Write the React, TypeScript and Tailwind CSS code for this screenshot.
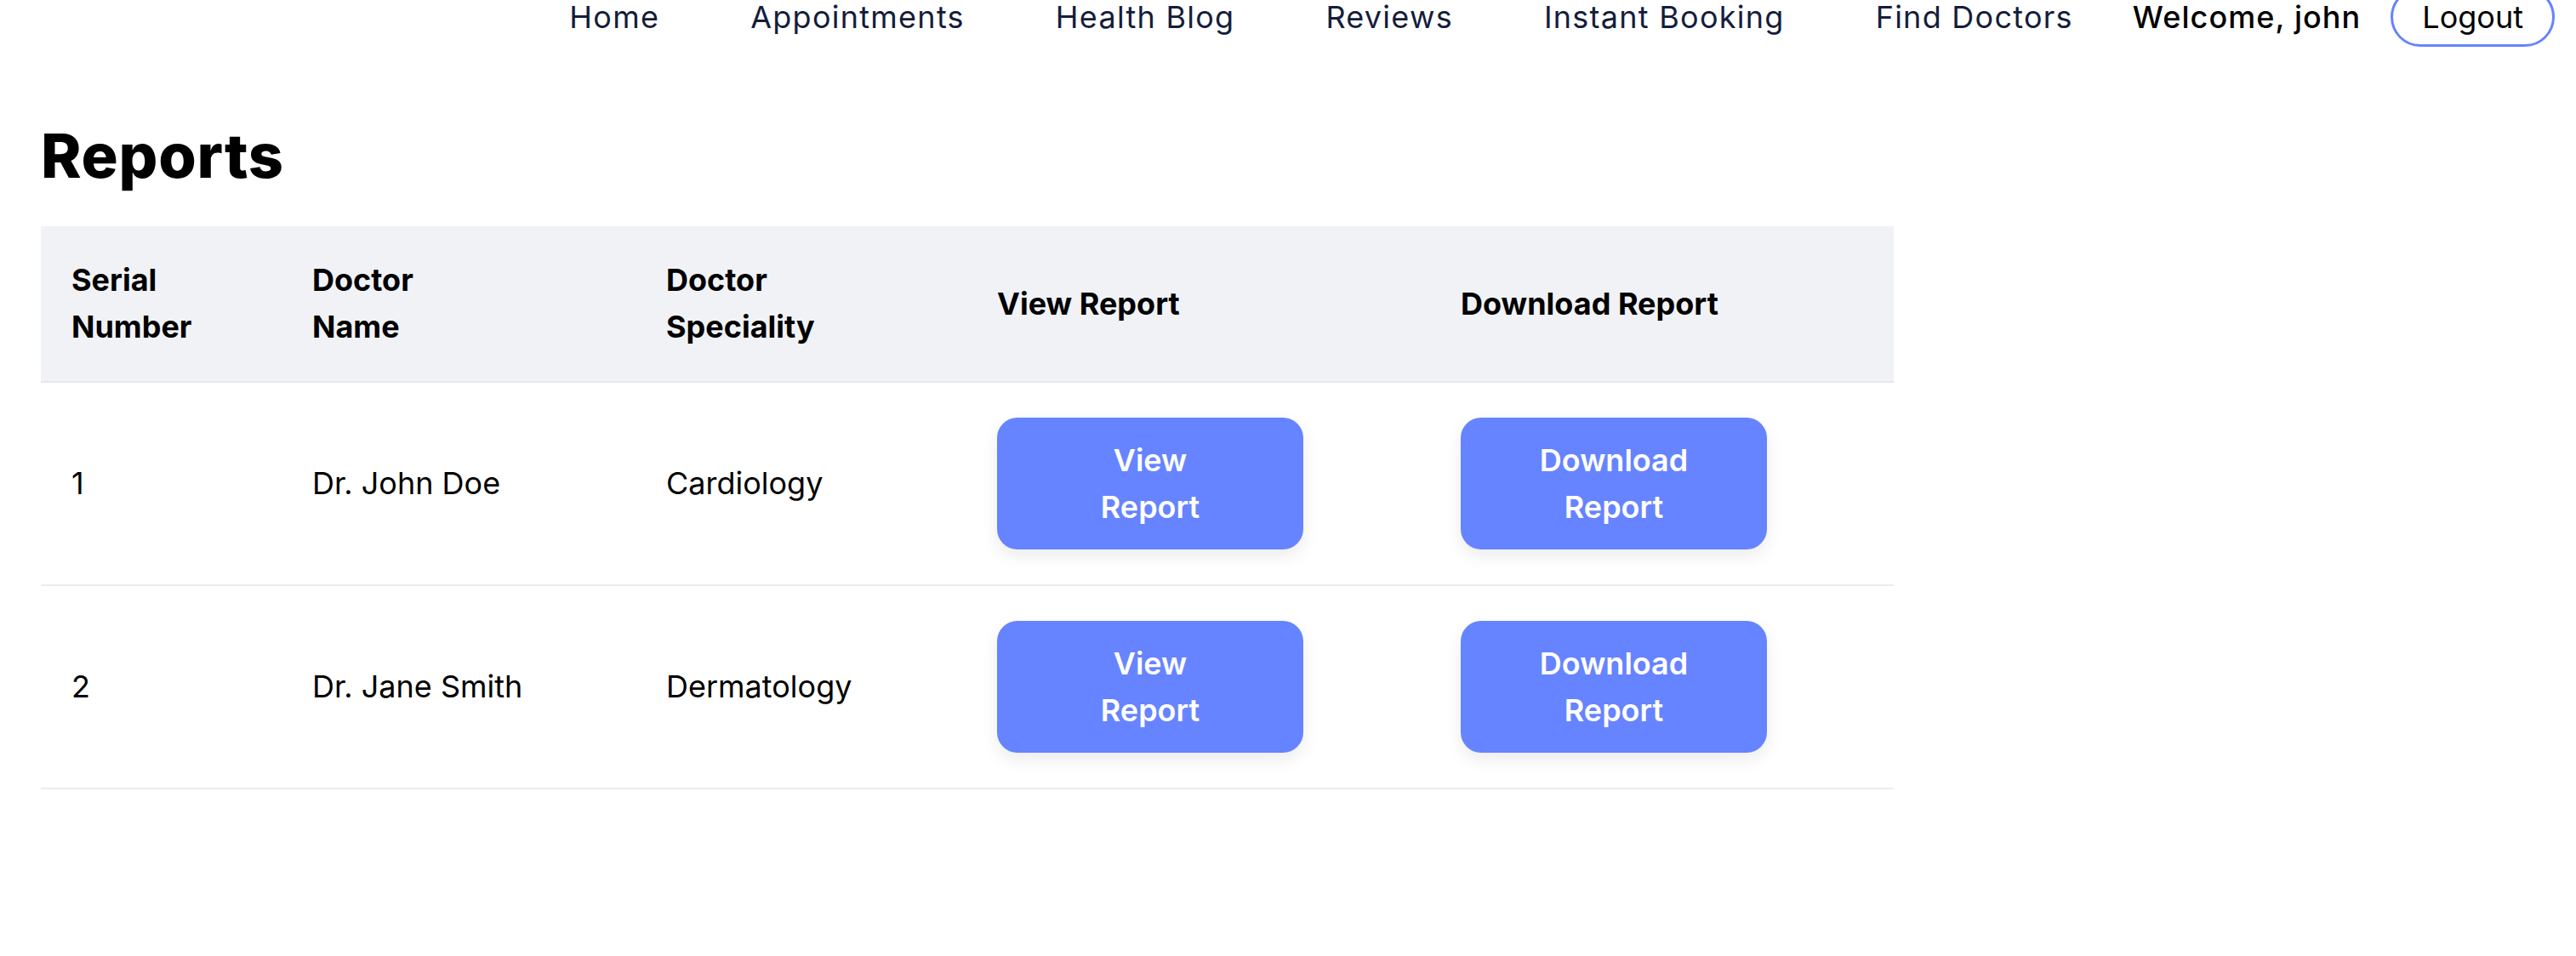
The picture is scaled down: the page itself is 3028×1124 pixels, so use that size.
const navLinks = ["Home", "Appointments", "Health Blog", "Reviews", "Instant Booking", "Find Doctors"]

const reports = [
  { id: 1, doctor: "Dr. John Doe", speciality: "Cardiology" },
  { id: 2, doctor: "Dr. Jane Smith", speciality: "Dermatology" },
]

export default function App() {
  return (
    <div className="min-h-screen bg-white text-black font-['Inter',sans-serif]">
      {/* Navbar */}
      <nav className="flex items-center justify-end h-[72px] -mt-4 pr-[25px] text-[36px]">
        <ul className="flex items-center gap-[107px] text-[#151d3b] tracking-[0.035em]">
          {navLinks.map((link) => (
            <li key={link}>
              <a href="#">{link}</a>
            </li>
          ))}
        </ul>
        <span className="ml-[70px] font-medium tracking-[0.03em]">Welcome, john</span>
        <button className="ml-[35px] h-[70px] px-[34px] rounded-full border-[3px] border-[#6684ff] text-black">
          Logout
        </button>
      </nav>

      {/* Content */}
      <main className="px-[48px]">
        <h1 className="mt-[84px] text-[72px] leading-[1.2] font-extrabold tracking-[0.01em]">Reports</h1>

        <table className="mt-[40px] w-[2178px] text-left text-[36px] leading-[55px] border-collapse">
          <colgroup>
            <col className="w-[283px]" />
            <col className="w-[416px]" />
            <col className="w-[389px]" />
            <col className="w-[545px]" />
            <col className="w-[545px]" />
          </colgroup>
          <thead className="bg-[#f0f2f6] border-b-2 border-[#e5e7eb]">
            <tr>
              <th className="px-9 py-9 font-bold">Serial<br />Number</th>
              <th className="px-9 py-9 font-bold">Doctor<br />Name</th>
              <th className="px-9 py-9 font-bold">Doctor<br />Speciality</th>
              <th className="px-9 py-9 font-bold">View Report</th>
              <th className="px-9 py-9 font-bold">Download Report</th>
            </tr>
          </thead>
          <tbody>
            {reports.map((r) => (
              <tr key={r.id} className="border-b-2 border-[#ececec]">
                <td className="px-9 py-[41px]">{r.id}</td>
                <td className="px-9 py-[41px]">{r.doctor}</td>
                <td className="px-9 py-[41px]">{r.speciality}</td>
                <td className="px-9 py-[41px]">
                  <button className="w-[360px] py-[22.5px] rounded-3xl bg-[#6684ff] text-white font-semibold shadow-[0_8px_20px_rgba(0,0,0,0.08)]">
                    View<br />Report
                  </button>
                </td>
                <td className="px-9 py-[41px]">
                  <button className="w-[360px] py-[22.5px] rounded-3xl bg-[#6684ff] text-white font-semibold shadow-[0_8px_20px_rgba(0,0,0,0.08)]">
                    Download<br />Report
                  </button>
                </td>
              </tr>
            ))}
          </tbody>
        </table>
      </main>
    </div>
  )
}
